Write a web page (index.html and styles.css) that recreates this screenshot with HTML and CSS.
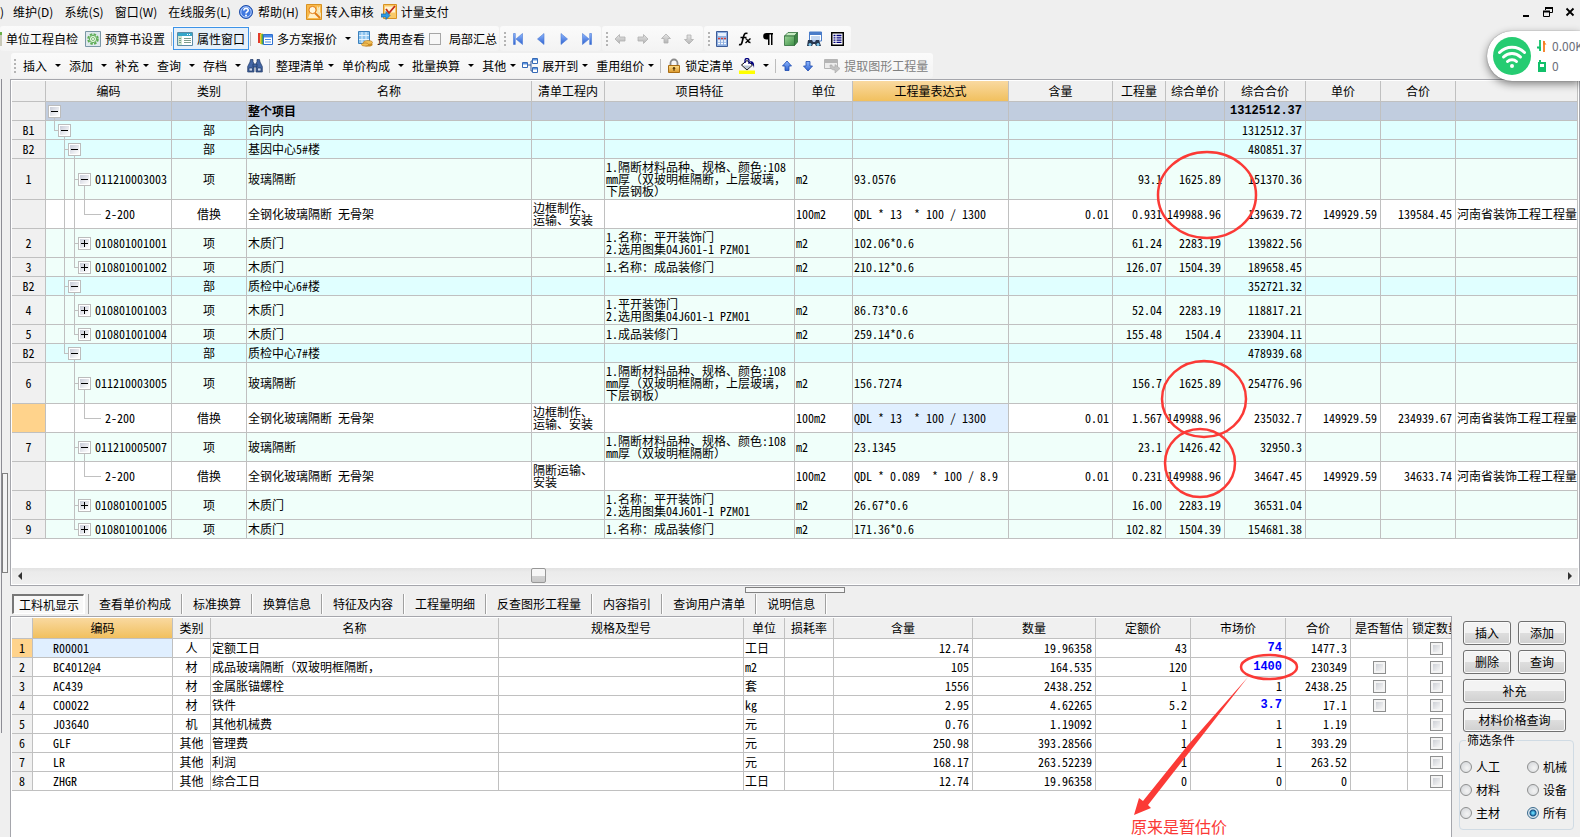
FILE: index.html
```html
<!DOCTYPE html>
<html lang="zh-CN">
<head>
<meta charset="utf-8">
<title>工程量清单计价</title>
<link rel="stylesheet" href="styles.css">
</head>
<body>
<svg width="0" height="0" class="defs" aria-hidden="true">
  <defs>
    <linearGradient id="blue" x1="0" y1="0" x2="0" y2="1"><stop offset="0" stop-color="#8fb8ff"/><stop offset="1" stop-color="#2f62d0"/></linearGradient>
    <linearGradient id="gold" x1="0" y1="0" x2="0" y2="1"><stop offset="0" stop-color="#ffe08a"/><stop offset="1" stop-color="#d9952a"/></linearGradient>
    <linearGradient id="green" x1="0" y1="0" x2="1" y2="1"><stop offset="0" stop-color="#9fd69a"/><stop offset="1" stop-color="#3c8f45"/></linearGradient>
    <linearGradient id="grey" x1="0" y1="0" x2="0" y2="1"><stop offset="0" stop-color="#e6e6e6"/><stop offset="1" stop-color="#b4b4b4"/></linearGradient>
  </defs>
</svg>
<div class="app">
  <header class="menubar">
    <nav class="menus">
      <button class="menu cut">)</button>
      <button class="menu">维护(D)</button>
      <button class="menu">系统(S)</button>
      <button class="menu">窗口(W)</button>
      <button class="menu">在线服务(L)</button>
      <button class="menu pic"><svg width="16" height="16" viewBox="0 0 16 16"><circle cx="8" cy="8" r="6.5" fill="#3f78e0" stroke="#1f4ea8"/><circle cx="8" cy="8" r="5.2" fill="none" stroke="#cfe0ff" stroke-width=".8"/><path d="M5.8 6.4C5.8 3.6 10.4 3.8 10.2 6.4 10 8 8 7.8 8 9.6" fill="none" stroke="#fff" stroke-width="1.6"/><circle cx="8" cy="11.6" r="1" fill="#fff"/></svg>帮助(H)</button>
      <button class="menu pic"><svg width="16" height="16" viewBox="0 0 16 16"><path d="M.5.500h15v15H.500z" fill="#f9b94a" stroke="#d99221"/><path d="M2 14l3-7 4 3 5-8v12z" fill="#fff0c8"/><path d="M11 2l3 3-2 2 3 2v5l-4-3z" fill="#f4e3b0"/><circle cx="6.500" cy="6" r="3.600" fill="#fff6dd" stroke="#e07c18"/><path d="M9 9l5 5" stroke="#e07c18" stroke-width="2"/></svg>转入审核</button>
      <button class="menu pic"><svg width="16" height="16" viewBox="0 0 16 16"><path d="M2.500.500h13v14h-13z" fill="#f9c968" stroke="#d99221"/><path d="M4 2.500h10v6H4z" fill="#fff3d2"/><path d="M5 5l3 4 6-7" fill="none" stroke="#c22a1c" stroke-width="1.800"/><path d="M0 10h5V7.500l4 4-4 4V13H0z" fill="#2f9be6" stroke="#1667a8" stroke-width=".7"/></svg>计量支付</button>
    </nav>
    <div class="winctl">
      <button aria-label="最小化"><svg width="12" height="12" viewBox="0 0 12 12"><path d="M3 9h6v2H3z"/></svg></button>
      <button aria-label="还原"><svg width="12" height="12" viewBox="0 0 12 12" fill="none" stroke="#000"><path d="M3.500 4V1.500h7v5H8"/><path d="M3 2h8" stroke-width="2"/><path d="M1.500 5.500h6v5h-6z"/><path d="M1 5.500h7" stroke-width="2"/></svg></button>
      <button aria-label="关闭"><svg width="12" height="12" viewBox="0 0 12 12" stroke="#000" stroke-width="1.800"><path d="M2.500 2.500l7 7M9.500 2.500l-7 7"/></svg></button>
    </div>
  </header>

  <div class="bars">
    <div class="group first">
      <svg width="2" height="16" viewBox="0 0 2 16"><path d="M0 1h2v3H0z" fill="#6ab04a"/><path d="M0 4h2v11H0z" fill="#c9c9b8"/></svg>
      <button class="tool">单位工程自检</button>
      <button class="tool"><svg width="16" height="16" viewBox="0 0 16 16"><path d="M.5.500h15v15H.500z" fill="#dfe9ee" stroke="#7b97a6"/><circle cx="8" cy="8" r="4.800" fill="none" stroke="#5fae56" stroke-width="2" stroke-dasharray="2.500 1.270"/><circle cx="8" cy="8" r="3.600" fill="#e6f5e2" stroke="#5fae56"/><circle cx="8" cy="8" r="1.500" fill="#fff" stroke="#5fae56" stroke-width=".8"/></svg>预算书设置</button>
      <span class="sep"></span>
      <button class="tool pressed"><svg width="16" height="16" viewBox="0 0 16 16"><path d="M.5 1.500h15v13H.500z" fill="#fff" stroke="#5b8aa5"/><path d="M1 2h14v3H1z" fill="#35a6c9"/><path d="M1 5h4v9H1z" fill="#cfe6d0"/><path d="M2 7.500h2m-2 2h2m-2 2h2m3-4h7m-7 2h7m-7 2h7" stroke="#7c9d8c"/><path d="M10 3.500h1m1 0h1" stroke="#fff"/></svg>属性窗口</button>
      <span class="sep"></span>
      <button class="tool dd"><svg width="16" height="16" viewBox="0 0 16 16"><path d="M1 2h3v10H1z" fill="#e23b2a"/><path d="M3 2.500h3V13H3z" fill="#f5c52a"/><path d="M4.500 3h3v10.500h-3z" fill="#49a84a"/><path d="M6.500 3.500h9v10h-9z" fill="#fff" stroke="#2f6fd0"/><path d="M7 4h8v2.500H7z" fill="#4b8be6"/><path d="M8 8.500h6m-6 2.500h6" stroke="#4b8be6"/></svg>多方案报价<i class="caret"></i></button>
      <button class="tool"><svg width="16" height="16" viewBox="0 0 16 16"><path d="M1.500.500h11v12h-11z" fill="#8cc4ee" stroke="#3a80bd"/><path d="M2 4.500h10M2 8.500h10M5 1v11M9 1v11" stroke="#e4f3ff"/><ellipse cx="11" cy="13.500" rx="4.500" ry="2" fill="#c98a22"/><ellipse cx="11" cy="11.500" rx="4.500" ry="2" fill="#f1bf56" stroke="#b5761a" stroke-width=".6"/><ellipse cx="8" cy="13.500" rx="3.500" ry="1.600" fill="#f1bf56" stroke="#b5761a" stroke-width=".6"/></svg>费用查看</button>
      <label class="check"><input type="checkbox" class="flat">局部汇总</label>
    </div>
    <div class="group">
      <span class="grip"></span>
      <button aria-label="首条"><svg width="16" height="16" viewBox="0 0 16 16" fill="url(#blue)" stroke="#4a78d4" stroke-width=".6"><path d="M3.500 2.500h1.800v11H3.500zM12.500 2.500v11L6 8z"/></svg></button>
      <button aria-label="上一条"><svg width="16" height="16" viewBox="0 0 16 16" fill="url(#blue)" stroke="#4a78d4" stroke-width=".6"><path d="M11 2.500v11L4.500 8z"/></svg></button>
      <button aria-label="下一条"><svg width="16" height="16" viewBox="0 0 16 16" fill="url(#blue)" stroke="#4a78d4" stroke-width=".6"><path d="M5 2.500v11L11.500 8z"/></svg></button>
      <button aria-label="末条"><svg width="16" height="16" viewBox="0 0 16 16" fill="url(#blue)" stroke="#4a78d4" stroke-width=".6"><path d="M10.700 2.500h1.800v11h-1.800zM3.500 2.500v11L10 8z"/></svg></button>
    </div>
    <div class="group">
      <span class="grip"></span>
      <button aria-label="左移"><svg width="16" height="16" viewBox="0 0 16 16" fill="url(#grey)" stroke="#b0b0b0" stroke-width=".8"><path d="M3 8l4.500-4.500V6H13v4H7.500v2.500z"/></svg></button>
      <button aria-label="右移"><svg width="16" height="16" viewBox="0 0 16 16" fill="url(#grey)" stroke="#b0b0b0" stroke-width=".8"><path d="M13 8L8.500 3.500V6H3v4h5.500v2.500z"/></svg></button>
      <button aria-label="上移"><svg width="16" height="16" viewBox="0 0 16 16" fill="url(#grey)" stroke="#b0b0b0" stroke-width=".8"><path d="M8 3l4.500 4.500H10V12H6V7.500H3.500z"/></svg></button>
      <button aria-label="下移"><svg width="16" height="16" viewBox="0 0 16 16" fill="url(#grey)" stroke="#b0b0b0" stroke-width=".8"><path d="M8 13l4.500-4.500H10V4H6v4.500H3.500z"/></svg></button>
    </div>
    <div class="group">
      <span class="grip"></span>
      <button aria-label="计算器"><svg width="16" height="16" viewBox="0 0 16 16"><path d="M2.500.500h11v15h-11z" fill="#8fb0e2" stroke="#3c5c98"/><path d="M4 2h8v3H4z" fill="#e8f2ff"/><path d="M4 7.500h8m-8 2.500h8m-8 2.500h8" stroke="#fff" stroke-width="1.600" stroke-dasharray="2 1"/><path d="M4 7.500h2m1 0h2m1 0h2" stroke="#d2403a" stroke-width="1.600"/></svg></button>
      <button aria-label="函数"><svg width="16" height="16" viewBox="0 0 16 16" fill="none" stroke="#000"><path d="M2 13.500c3 1 3-2 4-6s1.500-6 4.500-5M3.500 6.500h6" stroke-width="1.700"/><path d="M8.500 8c2-1 2 4 5 3.500M13.500 7.500l-5 4.500" stroke-width="1.400"/></svg></button>
      <button aria-label="段落"><svg width="16" height="16" viewBox="0 0 16 16"><path d="M13 2H6.500a3.300 3.300 0 0 0 0 6.600H8V14h1.500V3.500H11V14h1.500V3.500h.5z"/></svg></button>
      <button aria-label="构件"><svg width="16" height="16" viewBox="0 0 16 16" stroke="#2d6c38" stroke-width=".8"><path d="M1.500 5l3.500-3.500h9.500L11.500 5z" fill="#c6ebc1"/><path d="M11.500 5l3-3.500V11l-3 3.500z" fill="#3d8444"/><path d="M1.500 5h10v9.500h-10z" fill="url(#green)"/></svg></button>
      <button aria-label="查找报表"><svg width="16" height="16" viewBox="0 0 16 16"><path d="M3.500 1h12v9h-12z" fill="#fff" stroke="#4a7cc9"/><path d="M4 1h11v3H4z" fill="#4a7cc9"/><path d="M5 6h9m-9 2h9" stroke="#8cb0e4"/><path d="M2 9h4l1 2h2l1-2h3l2 6h-5l-1-2H7l-1 2H1z" fill="#27374f"/><circle cx="4" cy="13.500" r="1.500" fill="#7dc8ee"/><circle cx="12" cy="13.500" r="1.500" fill="#7dc8ee"/></svg></button>
      <button aria-label="列表"><svg width="16" height="16" viewBox="0 0 16 16"><path d="M2.750 1.750h11.500v12.500H2.750z" fill="#fff" stroke="#000" stroke-width="1.500"/><path d="M4.500 4.500h2m-2 2.300h2m-2 2.300h2m-2 2.300h2m1-6.900h5m-5 2.300h5m-5 2.300h5m-5 2.300h5" stroke="#00007c" stroke-width="1.300"/></svg></button>
    </div>
  </div>

  <div class="bars second">
    <div class="group">
      <span class="grip"></span>
      <button class="tool dd">插入<i class="caret"></i></button>
      <button class="tool dd">添加<i class="caret"></i></button>
      <button class="tool dd tight">补充<i class="caret"></i></button>
      <button class="tool dd">查询<i class="caret"></i></button>
      <button class="tool dd">存档<i class="caret"></i></button>
      <button class="tool" aria-label="查找"><svg width="16" height="16" viewBox="0 0 16 16" fill="#4467a6" stroke="#1e3763" stroke-width=".7"><path d="M3.500 1.500h2.500v2l1 2.500v8H.700V8.500L3 4z"/><path d="M12.500 1.500H10v2L9 6v8h6.300V8.500L13 4z"/><path d="M6 6h4v3H6z"/><path d="M2 10h3.500v3H2zm8.500 0H14v3h-3.500z" fill="#c9d8f2"/></svg></button>
      <span class="sep"></span>
      <button class="tool dd tight">整理清单<i class="caret"></i></button>
      <button class="tool dd">单价构成<i class="caret"></i></button>
      <button class="tool dd">批量换算<i class="caret"></i></button>
      <button class="tool dd tight">其他<i class="caret"></i></button>
      <button class="tool dd tight lead"><svg width="16" height="16" viewBox="0 0 16 16"><path d="M6 7h3M9 3v10M9 3h2M9 13h2" fill="none" stroke="#355a9c"/><g fill="#fff" stroke="#3569b5"><path d="M.5 4.500h5v5h-5z"/><path d="M10.500.500h5v5h-5zM10.500 9.500h5v5h-5z"/></g><path d="M1 5h4v1.500H1zM11 1h4v1.500h-4zM11 10h4v1.500h-4z" fill="#5b93e0"/></svg>展开到<i class="caret"></i></button>
      <button class="tool dd tight">重用组价<i class="caret"></i></button>
      <span class="sep"></span>
      <button class="tool"><svg width="14" height="16" viewBox="0 0 14 16"><path d="M3.500 8V5a3.500 3.500 0 0 1 7 0v3" fill="none" stroke="#8b8b8b" stroke-width="1.800"/><path d="M1.500 7.500h11v7h-11z" fill="url(#gold)" stroke="#a86c14"/><circle cx="7" cy="10.300" r="1.200" fill="#5a3b08"/><path d="M7 10v3" stroke="#5a3b08"/></svg>锁定清单</button>
      <button class="tool dd paint" aria-label="填充颜色"><svg width="16" height="16" viewBox="0 0 16 16"><path d="M0 12.500h16V16H0z" fill="#ff0"/><path d="M8 2.500L13.500 7 8 12 2.500 7z" fill="#fff" stroke="#000"/><path d="M4 7.500h8.500L8 11.500z" fill="#b8c4d4"/><path d="M6 5V2.500a2 2 0 0 1 4 0V6" fill="none" stroke="#00007c" stroke-width="1.300"/><path d="M11 3c4 0 4.500 3 4 7-1-3-1-4-3-4z" fill="#00007c"/></svg><i class="caret"></i></button>
      <span class="sep"></span>
      <button class="arrow" aria-label="上移"><svg width="10" height="12" viewBox="0 0 10 12"><path d="M5 1l4.500 5H7v4.500H3V6H.500z" fill="url(#blue)" stroke="#1b49ae" stroke-width=".8"/></svg></button>
      <button class="arrow" aria-label="下移"><svg width="10" height="12" viewBox="0 0 10 12"><path d="M5 11L.500 6H3V1.500h4V6h2.500z" fill="url(#blue)" stroke="#1b49ae" stroke-width=".8"/></svg></button>
      <button class="tool" disabled><svg width="16" height="16" viewBox="0 0 16 16"><path d="M.5 1.500h13v9H.500z" fill="#ececec" stroke="#b5b5b5"/><path d="M1 2h12v3H1z" fill="#b5b5b5"/><path d="M6 7c0 4 2 5 5 5v3l5-4.500L11 6.500V9C9 9 8 8.500 8 7z" fill="#c2c2c2" stroke="#a8a8a8" stroke-width=".6"/></svg>提取图形工程量</button>
    </div>
  </div>

  <div class="body">
    <div class="rail"><div class="rail-grip"></div></div>
    <main class="panes">
      <section class="frame bill">
        <table class="grid main">
          <colgroup><col class="w34"><col class="w126"><col class="w75"><col><col class="w73"><col class="w190"><col class="w58"><col class="w156"><col class="w104"><col class="w53"><col class="w59"><col class="w81"><col class="w75"><col class="w75"><col class="w122"></colgroup>
          <thead><tr><th><th>编码<th>类别<th>名称<th>清单工程内<th>项目特征<th>单位<th class="hot">工程量表达式<th>含量<th>工程量<th>综合单价<th>综合合价<th>单价<th>合价<th></tr></thead>
          <tbody>
            <tr class="root"><th><td><div class="tree"><i class="g b"><button class="tog" aria-label="折叠"></button></i></div><td><td>整个项目<td><td><td><td><td><td><td><td class="strong">1312512.37<td><td><td></tr>
            <tr class="part"><th>B1<td><div class="tree"><i class="g t h"></i><i class="g b"><button class="tog" aria-label="折叠"></button></i></div><td>部<td>合同内<td><td><td><td><td><td><td><td>1312512.37<td><td><td></tr>
            <tr class="part"><th>B2<td><div class="tree"><i class="g"></i><i class="g f h"></i><i class="g b"><button class="tog" aria-label="折叠"></button></i></div><td>部<td>基因中心5#楼<td><td><td><td><td><td><td><td>480851.37<td><td><td></tr>
            <tr class="item tall"><th>1<td><div class="tree"><i class="g"></i><i class="g f"></i><i class="g f h"></i><i class="g b"><button class="tog" aria-label="折叠"></button></i><span>011210003003</span></div><td>项<td>玻璃隔断<td><td>1.隔断材料品种、规格、颜色:108<br>mm<span class="fw">厚（双玻明框隔断，上层玻璃，<br>下层钢板）</span><td>m2<td>93.0576<td><td>93.1<td>1625.89<td>151370.36<td><td><td></tr>
            <tr class="mid"><th><td><div class="tree"><i class="g"></i><i class="g f"></i><i class="g f"></i><i class="g t leaf"></i><span class="deep">2-200</span></div><td>借换<td>全钢化玻璃隔断 无骨架<td>边框制作、<br>运输、安装<td><td>100m2<td>QDL * 13  * 100 / 1300<td>0.01<td>0.931<td>149988.96<td>139639.72<td>149929.59<td>139584.45<td>河南省装饰工程工程量</tr>
            <tr class="item mid"><th>2<td><div class="tree"><i class="g"></i><i class="g f"></i><i class="g f h"></i><i class="g"><button class="tog plus" aria-label="展开"></button></i><span>010801001001</span></div><td>项<td>木质门<td><td>1.名称：平开装饰门<br>2.选用图集04J601-1 PZM01<td>m2<td>102.06*0.6<td><td>61.24<td>2283.19<td>139822.56<td><td><td></tr>
            <tr class="item"><th>3<td><div class="tree"><i class="g"></i><i class="g f"></i><i class="g t h"></i><i class="g"><button class="tog plus" aria-label="展开"></button></i><span>010801001002</span></div><td>项<td>木质门<td><td>1.名称：成品装修门<td>m2<td>210.12*0.6<td><td>126.07<td>1504.39<td>189658.45<td><td><td></tr>
            <tr class="part"><th>B2<td><div class="tree"><i class="g"></i><i class="g f h"></i><i class="g b"><button class="tog" aria-label="折叠"></button></i></div><td>部<td>质检中心6#楼<td><td><td><td><td><td><td><td>352721.32<td><td><td></tr>
            <tr class="item mid"><th>4<td><div class="tree"><i class="g"></i><i class="g f"></i><i class="g f h"></i><i class="g"><button class="tog plus" aria-label="展开"></button></i><span>010801001003</span></div><td>项<td>木质门<td><td>1.平开装饰门<br>2.选用图集04J601-1 PZM01<td>m2<td>86.73*0.6<td><td>52.04<td>2283.19<td>118817.21<td><td><td></tr>
            <tr class="item"><th>5<td><div class="tree"><i class="g"></i><i class="g f"></i><i class="g t h"></i><i class="g"><button class="tog plus" aria-label="展开"></button></i><span>010801001004</span></div><td>项<td>木质门<td><td>1.成品装修门<td>m2<td>259.14*0.6<td><td>155.48<td>1504.4<td>233904.11<td><td><td></tr>
            <tr class="part"><th>B2<td><div class="tree"><i class="g"></i><i class="g t h"></i><i class="g b"><button class="tog" aria-label="折叠"></button></i></div><td>部<td>质检中心7#楼<td><td><td><td><td><td><td><td>478939.68<td><td><td></tr>
            <tr class="item tall"><th>6<td><div class="tree"><i class="g"></i><i class="g"></i><i class="g f h"></i><i class="g b"><button class="tog" aria-label="折叠"></button></i><span>011210003005</span></div><td>项<td>玻璃隔断<td><td>1.隔断材料品种、规格、颜色:108<br>mm<span class="fw">厚（双玻明框隔断，上层玻璃，<br>下层钢板）</span><td>m2<td>156.7274<td><td>156.7<td>1625.89<td>254776.96<td><td><td></tr>
            <tr class="mid"><th class="cur"><td><div class="tree"><i class="g"></i><i class="g"></i><i class="g f"></i><i class="g t leaf"></i><span class="deep">2-200</span></div><td>借换<td>全钢化玻璃隔断 无骨架<td>边框制作、<br>运输、安装<td><td>100m2<td class="sel">QDL * 13  * 100 / 1300<td>0.01<td>1.567<td>149988.96<td>235032.7<td>149929.59<td>234939.67<td>河南省装饰工程工程量</tr>
            <tr class="item mid"><th>7<td><div class="tree"><i class="g"></i><i class="g"></i><i class="g f h"></i><i class="g b"><button class="tog" aria-label="折叠"></button></i><span>011210005007</span></div><td>项<td>玻璃隔断<td><td>1.隔断材料品种、规格、颜色:108<br>mm<span class="fw">厚（双玻明框隔断）</span><td>m2<td>23.1345<td><td>23.1<td>1426.42<td>32950.3<td><td><td></tr>
            <tr class="mid"><th><td><div class="tree"><i class="g"></i><i class="g"></i><i class="g f"></i><i class="g t leaf"></i><span class="deep">2-200</span></div><td>借换<td>全钢化玻璃隔断 无骨架<td>隔断运输、<br>安装<td><td>100m2<td>QDL * 0.089  * 100 / 8.9<td>0.01<td>0.231<td>149988.96<td>34647.45<td>149929.59<td>34633.74<td>河南省装饰工程工程量</tr>
            <tr class="item mid"><th>8<td><div class="tree"><i class="g"></i><i class="g"></i><i class="g f h"></i><i class="g"><button class="tog plus" aria-label="展开"></button></i><span>010801001005</span></div><td>项<td>木质门<td><td>1.名称：平开装饰门<br>2.选用图集04J601-1 PZM01<td>m2<td>26.67*0.6<td><td>16.00<td>2283.19<td>36531.04<td><td><td></tr>
            <tr class="item"><th>9<td><div class="tree"><i class="g"></i><i class="g"></i><i class="g t h"></i><i class="g"><button class="tog plus" aria-label="展开"></button></i><span>010801001006</span></div><td>项<td>木质门<td><td>1.名称：成品装修门<td>m2<td>171.36*0.6<td><td>102.82<td>1504.39<td>154681.38<td><td><td></tr>
          </tbody>
        </table>
        <div class="scroll">
          <button aria-label="向左"><svg width="16" height="16" viewBox="0 0 16 16"><path d="M10 4v8L6 8z" fill="#333"/></svg></button>
          <div class="track"><div class="thumb"></div></div>
          <button aria-label="向右"><svg width="16" height="16" viewBox="0 0 16 16"><path d="M6 4v8l4-4z" fill="#333"/></svg></button>
        </div>
      </section>
      <div class="gutter"><div class="gutter-grip"></div></div>
      <nav class="tabs">
        <button class="tab active">工料机显示</button><button class="tab">查看单价构成</button><button class="tab">标准换算</button><button class="tab">换算信息</button><button class="tab">特征及内容</button><button class="tab">工程量明细</button><button class="tab">反查图形工程量</button><button class="tab">内容指引</button><button class="tab">查询用户清单</button><button class="tab">说明信息</button>
      </nav>
      <div class="lower">
        <section class="frame res">
          <table class="grid parts">
            <colgroup><col class="w21"><col class="w140"><col class="w38"><col><col class="w245"><col class="w41"><col class="w49"><col class="w139"><col class="w123"><col class="w95"><col class="w95"><col class="w65"><col class="w57"><col class="w57"></colgroup>
            <thead><tr><th><th class="hot">编码<th>类别<th>名称<th>规格及型号<th>单位<th>损耗率<th>含量<th>数量<th>定额价<th>市场价<th>合价<th>是否暂估<th>锁定数量</tr></thead>
            <tbody>
              <tr><th class="cur">1<td class="sel">R00001<td>人<td>定额工日<td><td>工日<td><td>12.74<td>19.96358<td>43<td class="strong mod">74<td>1477.3<td><td><input type="checkbox" aria-label="锁定数量"></tr>
              <tr><th>2<td>BC4012@4<td>材<td class="fw">成品玻璃隔断（双玻明框隔断，<td><td>m2<td><td>105<td>164.535<td>120<td class="strong mod">1400<td>230349<td><input type="checkbox" aria-label="是否暂估"><td><input type="checkbox" aria-label="锁定数量"></tr>
              <tr><th>3<td>AC439<td>材<td>金属胀锚螺栓<td><td>套<td><td>1556<td>2438.252<td>1<td>1<td>2438.25<td><input type="checkbox" aria-label="是否暂估"><td><input type="checkbox" aria-label="锁定数量"></tr>
              <tr><th>4<td>C00022<td>材<td>铁件<td><td>kg<td><td>2.95<td>4.62265<td>5.2<td class="strong mod">3.7<td>17.1<td><input type="checkbox" aria-label="是否暂估"><td><input type="checkbox" aria-label="锁定数量"></tr>
              <tr><th>5<td>J03640<td>机<td>其他机械费<td><td>元<td><td>0.76<td>1.19092<td>1<td>1<td>1.19<td><td><input type="checkbox" aria-label="锁定数量"></tr>
              <tr><th>6<td>GLF<td>其他<td>管理费<td><td>元<td><td>250.98<td>393.28566<td>1<td>1<td>393.29<td><td><input type="checkbox" aria-label="锁定数量"></tr>
              <tr><th>7<td>LR<td>其他<td>利润<td><td>元<td><td>168.17<td>263.52239<td>1<td>1<td>263.52<td><td><input type="checkbox" aria-label="锁定数量"></tr>
              <tr><th>8<td>ZHGR<td>其他<td>综合工日<td><td>工日<td><td>12.74<td>19.96358<td>0<td>0<td>0<td><td><input type="checkbox" aria-label="锁定数量"></tr>
            </tbody>
          </table>
        </section>
        <aside class="side">
          <div class="actions">
            <button>插入</button><button>添加</button><button>删除</button><button>查询</button><button class="wide">补充</button><button class="wide">材料价格查询</button>
          </div>
          <fieldset>
            <legend>筛选条件</legend>
            <div class="radios">
              <label><input type="radio" name="f">人工</label><label><input type="radio" name="f">机械</label>
              <label><input type="radio" name="f">材料</label><label><input type="radio" name="f">设备</label>
              <label><input type="radio" name="f">主材</label><label><input type="radio" name="f" checked>所有</label>
            </div>
          </fieldset>
        </aside>
      </div>
    </main>
  </div>

  <svg class="marks" width="460" height="837" viewBox="1120 0 460 837" aria-label="批注">
    <g fill="none" stroke="#fb3a36" stroke-width="2.500">
      <ellipse cx="1207" cy="195" rx="49" ry="43"/>
      <ellipse cx="1204" cy="399" rx="42" ry="38"/>
      <ellipse cx="1200" cy="463" rx="35" ry="34"/>
      <ellipse cx="1269" cy="667" rx="28" ry="12"/>
    </g>
    <path d="M1248 677L1148 805l3 3-17 7 5-17 4 3 45-56z" fill="#fb3a36"/>
    <text x="1131" y="833">原来是暂估价</text>
  </svg>

  <div class="wifi">
    <svg width="38" height="38" viewBox="0 0 38 38"><circle cx="19" cy="19" r="19" fill="#26cc72"/><g fill="none" stroke="#fff" stroke-width="3" stroke-linecap="round"><path d="M6.500 15.500a17.500 17.500 0 0 1 25 0"/><path d="M10.500 20a12 12 0 0 1 17 0"/><path d="M14.500 24.500a6.400 6.400 0 0 1 9 0"/></g><circle cx="19" cy="29" r="2" fill="#fff"/></svg>
    <div class="stats">
      <div><svg width="10" height="12" viewBox="0 0 10 12"><path d="M3 0v11M0 7.500h3" fill="none" stroke="#12c06a" stroke-width="1.800"/><path d="M.500 7L4 11V7z" fill="#12c06a"/><path d="M7 1v11" stroke="#f57c1f" stroke-width="1.800"/><path d="M9.500 4.500L6.100.500v4z" fill="#f57c1f"/></svg>0.00K</div>
      <div><svg width="10" height="12" viewBox="0 0 10 12"><path d="M1 2h1V0h2v2h5v10H1z" fill="#12c06a"/><path d="M3 4h4v3H3z" fill="#fff"/></svg>0</div>
    </div>
  </div>
</div>
</body>
</html>
```
FILE: styles.css
```css
* { box-sizing: border-box; }
body {
  margin: 0;
  background: #efefef;
  color: #000;
  font: 12px/16px "Noto Sans CJK SC", sans-serif;
  overflow: hidden;
}
button {
  appearance: none;
  display: inline-flex;
  align-items: center;
  margin: 0;
  padding: 0;
  border: 0;
  background: none;
  color: inherit;
  font: inherit;
  white-space: nowrap;
}
svg { display: block; flex: none; }
.defs { position: absolute; }
.app {
  position: relative;
  display: flex;
  flex-direction: column;
  min-height: 100vh;
}

/* menu bar */
.menubar {
  display: flex;
  justify-content: space-between;
  height: 24px;
  margin-bottom: 2px;
}
.menus { display: flex; gap: 11px; }
.menu { gap: 4px; }
.menu.cut { width: 2px; }
.menu.pic { margin-left: -4px; }
.winctl { display: flex; gap: 10px; padding-right: 4px; }

/* toolbars */
.bars { display: flex; gap: 1px; height: 25px; margin-bottom: 2px; }
.group {
  --sep: 6px;
  display: flex;
  align-items: center;
  gap: 7px;
  padding: 0 6px 0 4px;
  border-radius: 3px;
  background: linear-gradient(#fbfbfb, #f3f3f3);
}
.first { gap: 0; padding: 0 2px 0 0; }
.first > .tool { gap: 4px; }
.first > .tool + .tool { margin-left: 7px; }
.first > svg + .tool { margin-left: 4px; }
.first .dd + .tool { margin-left: 6px; }
.grip {
  width: 2px;
  height: 14px;
  margin-right: -3px;
  background: repeating-linear-gradient(#b4b4b4 0 2px, transparent 2px 4px);
}
.sep {
  width: 1px;
  height: 14px;
  margin: 0 var(--sep);
  background: #bdbdbd;
}
.tool { gap: 4px; }
.tool:disabled { color: #808080; }
.pressed {
  height: 23px;
  margin: 0 -4px;
  padding: 0 3px;
  border: 1px solid #3c93e8;
  background: #e6f0fa;
}
.first .pressed { margin: 0 -5px; }
.caret {
  margin-left: 4px;
  border: 3px solid transparent;
  border-top-color: #000;
  border-bottom: 0;
}
.tight .caret { margin-left: 0; }
.check { display: flex; align-items: center; gap: 8px; margin-left: 4px; }
.flat {
  appearance: none;
  width: 12px;
  height: 12px;
  margin: 0;
  border: 1px solid #a6a6a6;
  background: #f7f7f7;
}
.second { margin: 0 0 1px 11px; }
.second .group { gap: 0; padding: 0 5px 0 3px; }
.second .grip { margin-right: 7px; }
.second .dd + .dd { margin-left: 8px; }
.second .dd + .lead { margin-left: 6px; }
.second .dd + .tool:not(.dd), .second .tool + .paint { margin-left: 6px; }
.second .arrow { margin-right: 11px; }

/* body */
.body { display: flex; flex: 1; }
.rail {
  width: 10px;
  padding: 394px 0 0 2px;
  background: linear-gradient(#8c8c94, #8c8c94) 1px 0 / 1px 654px no-repeat;
}
.rail-grip {
  width: 6px;
  height: 100px;
  border: 1px solid #808080;
  background: #f4f4f4;
}
.panes { display: flex; flex: 1; flex-direction: column; min-width: 0; }
.frame {
  padding: 1px;
  border: 1px solid #a5a6ac;
  background: #fff;
}

/* grids */
.grid {
  width: 100%;
  table-layout: fixed;
  border-collapse: separate;
  border-spacing: 0;
  line-height: 12px;
  font-feature-settings: "hwid" 1;
}
.grid th, .grid td {
  height: 19px;
  padding: 0 3px 0 1px;
  border: solid #c0c0c0;
  border-width: 0 1px 1px 0;
  overflow: hidden;
  text-align: left;
  white-space: pre;
}
.grid th {
  padding: 0;
  background: #f0f0f0;
  font-weight: 400;
  text-align: center;
}
.grid thead th { height: 21px; }
.grid th.hot { background: linear-gradient(#f9d9a0, #f1c05e); }
.grid th.cur { background: #ffd38c; }
.grid td.sel { background: #e0efff; }
.grid .mid > * { height: 29px; }
.grid .tall > * { height: 41px; }
.grid .fw { font-feature-settings: normal; }
.root td { background: #c1cddf; font-weight: 700; }
.part td { background: #e0ffff; }
.item td { background: #f0fffa; }
.main td:nth-child(2) { padding: 0 0 0 3px; }
.grid td:nth-child(3) { padding: 0; text-align: center; }
.main td:nth-child(n+9):nth-child(-n+14),
.parts td:nth-child(n+8):nth-child(-n+12) { text-align: right; }
.parts { width: calc(100% + 15px); }
.parts td:nth-child(2) { padding-left: 20px; }
.parts td:nth-child(n+13) { padding: 0; text-align: center; }
.grid .strong { font-family: "Liberation Mono", monospace; font-weight: 700; }
.grid .mod { color: #00f; }
.w21 { width: 21px; } .w34 { width: 34px; } .w38 { width: 38px; }
.w41 { width: 41px; } .w49 { width: 49px; } .w53 { width: 53px; }
.w57 { width: 57px; } .w58 { width: 58px; } .w59 { width: 59px; }
.w65 { width: 65px; } .w73 { width: 73px; } .w75 { width: 75px; }
.w81 { width: 81px; } .w95 { width: 95px; } .w104 { width: 104px; }
.w122 { width: 122px; } .w123 { width: 123px; } .w126 { width: 126px; }
.w139 { width: 139px; } .w140 { width: 140px; } .w156 { width: 156px; }
.w190 { width: 190px; } .w245 { width: 245px; }

/* tree guides */
.tree { display: flex; align-items: center; height: 18px; }
.mid .tree { height: 28px; }
.tall .tree { height: 40px; }
.g { position: relative; width: 10px; height: 100%; }
.g::before, .g::after { position: absolute; left: 5px; background: #c0c0c0; }
.f::before, .t::before, .b::before { content: ""; width: 1px; top: 0; bottom: 0; }
.t::before { bottom: 50%; }
.b::before { top: 50%; }
.h::after, .leaf::after { content: ""; width: 8px; height: 1px; top: 50%; }
.leaf::after { width: 17px; }
.tree span { margin-left: 6px; }
.tree .deep { margin-left: 16px; }
.tog {
  position: absolute;
  top: calc(50% - 6px);
  left: -1px;
  z-index: 1;
  width: 13px;
  height: 13px;
  border: 1px solid #bcbcbc;
  background:
    linear-gradient(#000, #000) center / 7px 1px no-repeat,
    linear-gradient(135deg, #c8ccd8, #fff) center / 9px 9px no-repeat,
    #fff;
}
.tog.plus {
  background:
    linear-gradient(#000, #000) center / 7px 1px no-repeat,
    linear-gradient(#000, #000) center / 1px 7px no-repeat,
    linear-gradient(135deg, #c8ccd8, #fff) center / 9px 9px no-repeat,
    #fff;
}

/* scroll bar and splitter */
.scroll { display: flex; height: 16px; margin-top: 29px; background: linear-gradient(#e2e2e2, #ebebeb 4px, #efefef); }
.track { flex: 1; padding-left: 503px; }
.thumb {
  width: 15px;
  height: 15px;
  border: 1px solid #979797;
  border-radius: 2px;
  background: linear-gradient(#f6f6f6 50%, #d2d2d2 50%, #c8c8c8);
}
.gutter { display: flex; justify-content: center; height: 8px; padding-top: 1px; }
.gutter-grip { width: 100px; height: 6px; border: 1px solid #808080; background: #f6f6f6; }

/* tabs */
.tabs { display: flex; height: 20px; margin-bottom: 2px; padding-left: 2px; }
.tab {
  padding: 0 10px 0 11px;
  border-right: 1px solid #a0a0a0;
  box-shadow: 1px 0 #fff;
}
.tab.active {
  margin-right: 4px;
  padding: 0 4px 0 5px;
  border: 1px solid #777;
  border-width: 2px 1px 1px 2px;
  border-right-color: #fff;
  border-bottom-color: #fff;
  background: #f8f8f8;
}
.tab.active + .tab { padding-left: 10px; border-left: 1px solid #a0a0a0; }

/* lower pane */
.lower { display: flex; flex: 1; }
.res { flex: 1; min-width: 0; overflow: hidden; border-bottom: 0; }
.side { width: 128px; padding: 5px 0 0 7px; }
.actions {
  display: grid;
  grid-template-columns: 48px 48px;
  gap: 5px 7px;
  margin-left: 4px;
}
.actions button {
  justify-content: center;
  height: 24px;
  border: 1px solid #707070;
  border-radius: 3px;
  background: linear-gradient(#f3f3f3 50%, #dedede 50%, #d0d0d0);
  box-shadow: inset 0 0 0 1px #fafafa;
}
.actions .wide { grid-column: span 2; }
fieldset {
  width: 115px;
  margin: 0;
  padding: 11px 0 8px;
  border: 1px solid #d0dbe4;
  border-radius: 4px;
}
legend { margin-left: 6px; padding: 0 1px; }
.radios { display: grid; grid-template-columns: 67px 1fr; row-gap: 7px; }
.radios label { display: flex; align-items: center; gap: 4px; }
input[type=radio] {
  appearance: none;
  width: 12px;
  height: 12px;
  margin: 0;
  border: 1px solid #8e8f8f;
  border-radius: 50%;
  background: radial-gradient(circle at 60% 60%, #f4f4f4, #cfd2d6);
}
input[type=radio]:checked {
  border-color: #3a6a8c;
  background: radial-gradient(circle, #5fd0f5 0 1px, #0f4f86 3px, #d9e6ef 4px);
}
.grid input {
  appearance: none;
  display: block;
  width: 13px;
  height: 13px;
  margin: 0 auto;
  border: 1px solid #8e8f8f;
  background: linear-gradient(135deg, #cdd0d6, #f6f6f6) center / 7px 7px no-repeat, #f4f4f4;
}

/* overlays */
.marks { position: absolute; top: 0; right: 0; pointer-events: none; }
.marks text { fill: #fb3a36; font-size: 16px; }
.wifi {
  position: absolute;
  top: 31px;
  right: 0;
  display: flex;
  align-items: center;
  gap: 6px;
  width: 93px;
  height: 50px;
  padding-left: 6px;
  border-radius: 25px 0 0 25px;
  background: #fff;
  box-shadow: 0 3px 8px #0007, 0 0 1px #0008;
  color: #6b6f7c;
  overflow: hidden;
}
.stats { display: grid; gap: 4px; white-space: nowrap; }
.stats div { display: flex; align-items: center; gap: 5px; }
```
